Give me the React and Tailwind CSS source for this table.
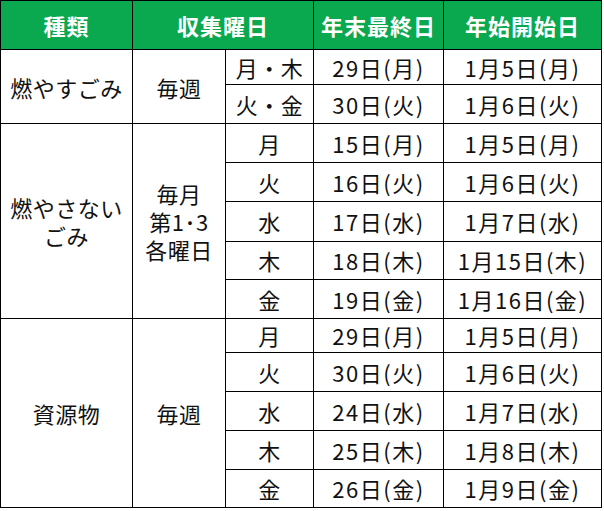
import React from 'react';

const groups = [
  {
    kind: ['燃やすごみ'],
    when: ['毎週'],
    rows: [
      ['月・木', '29日(月)', '1月5日(月)', 'h-[35px]'],
      ['火・金', '30日(火)', '1月6日(火)', 'h-[39px]'],
    ],
  },
  {
    kind: ['燃やさない', 'ごみ'],
    when: ['毎月', '第1･3', '各曜日'],
    rows: [
      ['月', '15日(月)', '1月5日(月)', 'h-[39px]'],
      ['火', '16日(火)', '1月6日(火)', 'h-[39px]'],
      ['水', '17日(水)', '1月7日(水)', 'h-[40px]'],
      ['木', '18日(木)', '1月15日(木)', 'h-[38px]'],
      ['金', '19日(金)', '1月16日(金)', 'h-[39px]'],
    ],
  },
  {
    kind: ['資源物'],
    when: ['毎週'],
    rows: [
      ['月', '29日(月)', '1月5日(月)', 'h-[34px]'],
      ['火', '30日(火)', '1月6日(火)', 'h-[39px]'],
      ['水', '24日(水)', '1月7日(水)', 'h-[39px]'],
      ['木', '25日(木)', '1月8日(木)', 'h-[39px]'],
      ['金', '26日(金)', '1月9日(金)', 'h-[38px]'],
    ],
  },
];

const td = 'border border-black p-0 text-center align-middle';

const Lines = ({ lines }) => (
  <div className="flex flex-col items-center gap-[6px] leading-[22px]">
    {lines.map((l) => (
      <div key={l}>{l}</div>
    ))}
  </div>
);

export default function App() {
  return (
    <div className="h-[511px] w-[604px] bg-white">
      <table
        className="w-[602px] table-fixed border-collapse text-[22px] tracking-[0.5px] text-[#111]"
        style={{ fontFamily: '"Noto Sans CJK JP", "Noto Sans", sans-serif' }}
      >
        <colgroup>
          <col className="w-[132px]" />
          <col className="w-[93px]" />
          <col className="w-[88px]" />
          <col className="w-[130px]" />
          <col className="w-[158px]" />
        </colgroup>
        <thead>
          <tr className="h-[49px] bg-[#0aa84f] font-bold tracking-[1px] text-white">
            <th className={td}>種類</th>
            <th className={td} colSpan={2}>収集曜日</th>
            <th className={td}>年末最終日</th>
            <th className={td}>年始開始日</th>
          </tr>
        </thead>
        <tbody>
          {groups.map((g) =>
            g.rows.map((r, i) => (
              <tr key={g.kind[0] + r[0]} className={r[3]}>
                {i === 0 && (
                  <>
                    <td className={td} rowSpan={g.rows.length}>
                      <Lines lines={g.kind} />
                    </td>
                    <td className={td} rowSpan={g.rows.length}>
                      <Lines lines={g.when} />
                    </td>
                  </>
                )}
                <td className={td}>{r[0]}</td>
                <td className={`${td} tracking-[1.5px]`}>{r[1]}</td>
                <td className={`${td} tracking-[1.5px]`}>{r[2]}</td>
              </tr>
            ))
          )}
        </tbody>
      </table>
    </div>
  );
}
